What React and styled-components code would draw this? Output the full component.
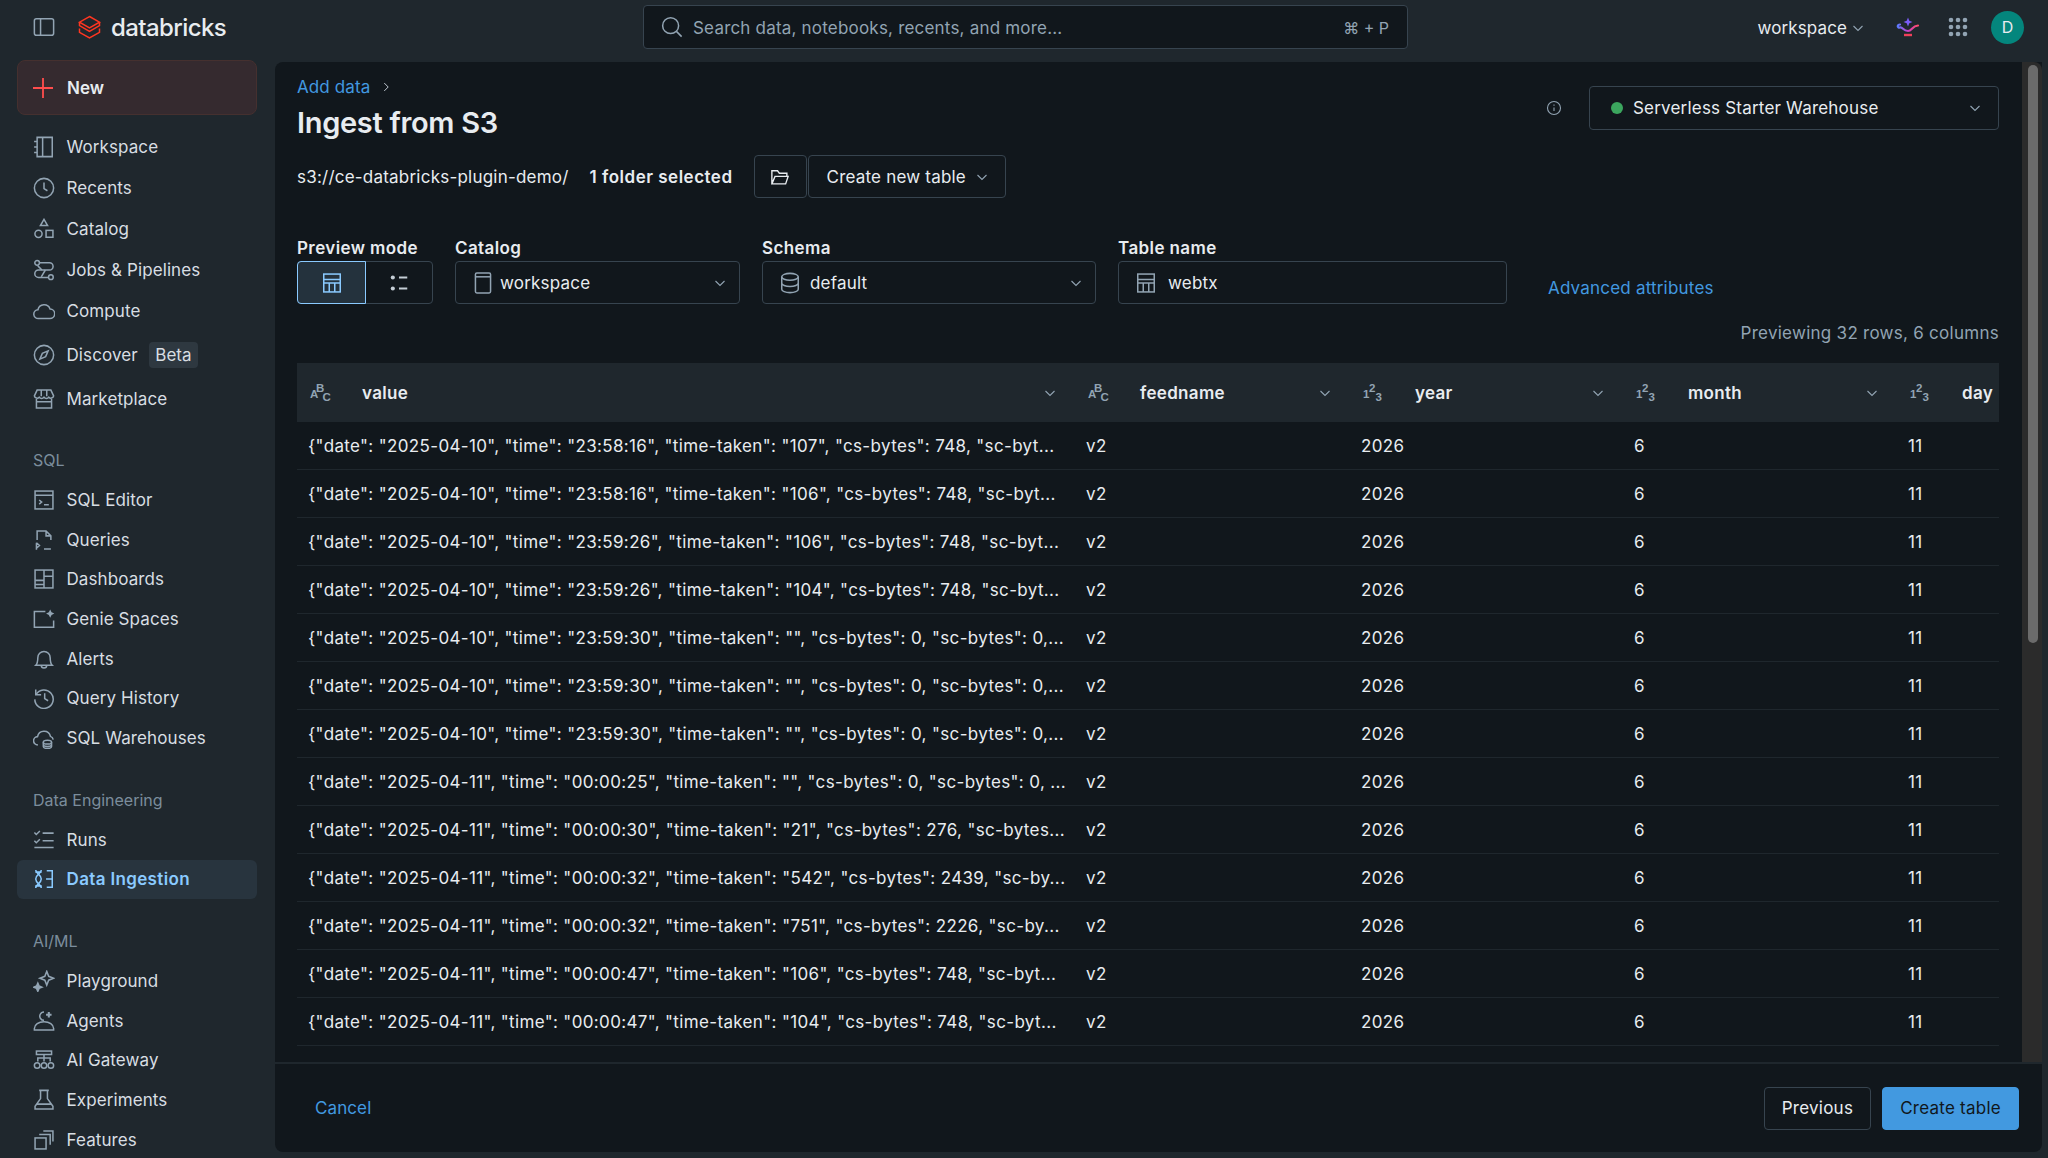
import React from 'react'
import styled, { createGlobalStyle } from 'styled-components'

const GlobalStyle = createGlobalStyle`
  html, body, #root {
    margin: 0;
    height: 100%;
    background: #1f272d;
  }

  body {
    overflow: hidden;
    font-family: Inter, 'Noto Sans', sans-serif;
    font-size: 17px;
    color: #e8ecf0;
  }
`

const icons = {
  panel: <><rect x="1" y="2" width="14" height="12" rx="1.5" /><path d="M5.5 2v12" /></>,
  workspace: <><path d="M3 1h11v14H3zM7 1v14" /><path d="M.8 4H3M.8 8H3M.8 12H3" /></>,
  recents: <><circle cx="8" cy="8" r="7" /><path d="M8 4v4.5l2.5 1.5" /></>,
  catalog: <><path d="M8 1l2.6 4.5H5.4z" /><circle cx="4" cy="11.5" r="2.6" /><rect x="9.5" y="9" width="5" height="5" /></>,
  jobs: <><circle cx="3" cy="2.8" r="1.7" /><circle cx="13" cy="13.2" r="1.7" /><path d="M4.7 2.8H12a2.6 2.6 0 0 1 0 5.2H4a2.6 2.6 0 0 0 0 5.4h7.3" /><path d="M3.5 5l3 3M9 8l-3 5" /></>,
  compute: <path d="M4 13.5a3.2 3.2 0 0 1-.4-6.4 4.6 4.6 0 0 1 8.8-.6 3.5 3.5 0 0 1-.2 7z" />,
  discover: <><circle cx="8" cy="8" r="7" /><path d="M11 5l-1.8 4.2L5 11l1.8-4.2z" /></>,
  marketplace: <><path d="M3 1.5h10l2 4.2a2 2 0 0 1-3.5 1 2.2 2.2 0 0 1-3.5 0 2.2 2.2 0 0 1-3.5 0A2 2 0 0 1 1 5.700z" /><path d="M2.500 8v6.500h11V8M2 10h12M6 1.500V6M10 1.500V6" /></>,
  editor: <><rect x="1.500" y="1.500" width="13" height="13" /><path d="M1.500 4.500h13M4.500 8l1.800 1.500L4.500 11M8 11.500h3.500" /></>,
  queries: <><path d="M3 8V1.500h6.500L13 5v3M9.500 1.500V5H13" /><path d="M2.500 10l2.200 2-2.200 2M8 14.500h5M2.500 10V15" /></>,
  dashboards: <><rect x="1.500" y="1.500" width="13" height="13" /><path d="M8 1.500v13M1.500 9h6.500M8 6h6.500M1.500 12h6.500" /></>,
  genie: <><path d="M9 2.500H1v11.500h14V9" /><path d="M12.500 1l1 2 2 1-2 1-1 2-1-2-2-1 2-1z" fill="currentColor" stroke="none" /></>,
  alerts: <><path d="M2 12.500c1.500-1.500 1.500-3 1.500-5.500a4.500 4.500 0 0 1 9 0c0 2.500 0 4 1.500 5.500z" /><path d="M6 12.500a2 2 0 0 0 4 0" /></>,
  history: <><path d="M2.200 5.500A6.700 6.700 0 1 1 1.300 9" /><path d="M2 1.800v3.900h3.900M8.500 4.500v4l2.500 1.500" /></>,
  warehouses: <><path d="M3.500 13a3 3 0 0 1-.2-6 4.800 4.800 0 0 1 9.400-.2 3 3 0 0 1 2 2.400" /><ellipse cx="10.500" cy="11" rx="3" ry="1.400" /><path d="M7.500 11v3.200c0 .800 1.400 1.400 3 1.400s3-.6 3-1.400V11M7.500 12.800c0 .8 1.400 1.400 3 1.400s3-.6 3-1.400" /></>,
  runs: <><path d="M1 2.500l1.400 1.500L5 1.500M1 8.500L2.400 10 5 7.500M7 3h8M1 13.500h14M7 8.500h8" /></>,
  ingestion: <><path d="M2 1.500c0 3 4 3 4 6.500s-4 3.500-4 6.500" /><path d="M6 1.500c0 3-4 3-4 6.500s4 3.500 4 6.500" /><path d="M1.800 3h4.400M1.800 13h4.400" /><path d="M10 2h4v12h-4M9.500 8H14" /></>,
  playground: <><path d="M10 1l1.400 3.600L15 6l-3.600 1.400L10 11 8.600 7.400 5 6l3.600-1.400z" /><path d="M3.500 9.500l.9 2.100 2.100.9-2.100.9-.9 2.100-.9-2.100-2.100-.9 2.100-.9z" fill="currentColor" /></>,
  agents: <><path d="M8 7.500a3 3 0 0 1-2.800-4.200A3 3 0 0 1 8 1.500" /><path d="M11.500 1.500v4M9.500 3.500h4" strokeWidth="1.500" /><path d="M1 13.500a7 5 0 0 1 14 0v1H1z" /></>,
  gateway: <><rect x="2.500" y="1.500" width="11" height="2.500" /><path d="M8 4v2.500M3.500 9V6.500h9V9M8 6.500V9" /><circle cx="3" cy="12" r="2" /><circle cx="8" cy="12" r="2" /><circle cx="13" cy="12" r="2" /></>,
  experiments: <><path d="M4.500 1h7M5.500 1v6L1.500 12.500v2h13v-2L10.500 7V1M3 11h10" /></>,
  features: <><rect x="1.500" y="6.500" width="8" height="8" /><path d="M4.500 4h8v7.500M7.500 1.500h7V9" /></>,
  table: <><rect x="2" y="1.500" width="12" height="13" /><path d="M2 5.500h12M2 8h12M6 8v6.500M10 8v6.500" /></>,
  list: <><circle cx="3.500" cy="4" r="1.500" fill="currentColor" stroke="none" /><circle cx="3.500" cy="12" r="1.500" fill="currentColor" stroke="none" /><path d="M8 4h6M8 12h6" strokeWidth="1.600" /></>,
  folder: <path d="M1.500 13.500V3h4.500l1.500 2h6v2.500M1.500 13.500h11l2-6H4z" />,
  catalogBox: <><rect x="2.500" y="0.800" width="11" height="14.400" rx="1" /><path d="M2.500 3.500h11" /></>,
  database: <><ellipse cx="8" cy="3.500" rx="6" ry="2.500" /><path d="M2 3.500v9c0 1.400 2.700 2.500 6 2.500s6-1.100 6-2.500v-9M2 8c0 1.400 2.700 2.500 6 2.500s6-1.100 6-2.500" /></>,
  info: <><circle cx="8" cy="8" r="6.500" /><path d="M8 7.500v3.500M8 4.500v1.200" /></>,
  search: <><circle cx="7" cy="7" r="5.800" /><path d="M11.200 11.200L15 15" /></>,
  chevron: <path d="M3.500 6l4.500 4.500L12.500 6" />,
  crumb: <path d="M6 3.500L10.500 8 6 12.500" />,
}

const Icon = ({ name, size = 22, ...rest }) => (
  <svg width={size} height={size} viewBox="0 0 16 16" fill="none" stroke="currentColor" strokeWidth="1.100" {...rest}>
    {icons[name]}
  </svg>
)

const Chevron = styled(Icon).attrs({ name: 'chevron', size: 16 })`
  color: #92a4b3;
  flex-shrink: 0;
`

const Logo = () => (
  <svg width="23" height="24" viewBox="0 0 23 24" fill="none" stroke="#ff3621" strokeWidth="1.500">
    <path d="M11.500 1.500l10 5.700-10 5.700-10-5.700z" />
    <path d="M1.500 7.200v3.400l10 5.700 10-5.700V7.200" />
    <path d="M1.500 13.600v3.700l10 5.700 10-5.700v-3.700" />
  </svg>
)

const GenieIcon = () => (
  <svg width="24" height="20" viewBox="0 0 24 20" fill="none">
    <defs>
      <linearGradient id="genieWave" x1="0" x2="1" y1="0" y2="0">
        <stop offset="0" stopColor="#5b7bff" />
        <stop offset="0.5" stopColor="#c93fc6" />
        <stop offset="1" stopColor="#ff4d6a" />
      </linearGradient>
    </defs>
    <path d="M12 0.500l1.300 3.200 3.200 1.300-3.200 1.300L12 9.500l-1.300-3.200L7.500 5l3.200-1.300z" fill="#7a5cf5" />
    <path d="M4 7.500C1 7.500 1 11 4 10.500 7 10 7 14 12 14 16 14 16 9 22 8.500" stroke="url(#genieWave)" strokeWidth="2.200" strokeLinecap="round" />
    <path d="M8 18h8" stroke="#f0405a" strokeWidth="2.400" />
  </svg>
)

const GridDots = () => (
  <svg width="20" height="20" viewBox="0 0 20 20" fill="#92a4b3">
    {[3, 10, 17].flatMap((y) => [3, 10, 17].map((x) => <circle key={`${x}-${y}`} cx={x} cy={y} r="2.300" />))}
  </svg>
)

const TypeGlyph = styled.svg`
  flex-shrink: 0;
  overflow: visible;
`

const TypeIcon = ({ chars }) => (
  <TypeGlyph width="21" height="21" viewBox="0 0 21 21" fill="#92a4b3" fontFamily="'Liberation Sans', sans-serif" fontSize="11.500" fontWeight="700">
    <text x="0" y="15.500">{chars[0]}</text>
    <text x="6" y="9.500">{chars[1]}</text>
    <text x="12.500" y="19">{chars[2]}</text>
  </TypeGlyph>
)

const Shell = styled.div`
  display: grid;
  grid-template-columns: 275px 1fr;
  grid-template-rows: 60px 1fr;
  height: 100vh;
  overflow: hidden;
`

const TopBar = styled.header`
  grid-column: 1 / 3;
  display: flex;
  align-items: center;
  height: 54px;
  padding-right: 24px;
`

const TopLeft = styled.div`
  display: flex;
  align-items: center;
  width: 643px;
  padding-left: 33px;
  box-sizing: border-box;
  color: #92a4b3;
`

const LogoWrap = styled.div`
  display: flex;
  align-items: center;
  gap: 10px;
  margin-left: 23px;
`

const LogoText = styled.span`
  font-size: 24px;
  font-weight: 500;
  letter-spacing: -0.6px;
  color: #e8ecf0;
`

const Search = styled.div`
  display: flex;
  align-items: center;
  width: 765px;
  height: 44px;
  padding: 0 18px 0 17px;
  box-sizing: border-box;
  background: #11171c;
  border: 1px solid #37444f;
  border-radius: 4px;
  color: #92a4b3;
`

const SearchText = styled.span`
  flex: 1;
  margin: 2px 0 0 10px;
  letter-spacing: 0.2px;
`

const Shortcut = styled.span`
  margin-top: 2px;
  font-size: 16px;
`

const TopRight = styled.div`
  display: flex;
  align-items: center;
  margin-left: auto;
`

const WorkspaceName = styled.div`
  display: flex;
  align-items: center;
  gap: 3px;
  margin: 2px 30px 0 0;
  letter-spacing: 0.1px;
`

const GenieWrap = styled.div`
  display: flex;
  margin-right: 28px;
`

const Avatar = styled.div`
  display: flex;
  align-items: center;
  justify-content: center;
  width: 33px;
  height: 33px;
  margin-left: 23px;
  border-radius: 50%;
  background: #04867d;
  font-size: 16px;
`

const Sidebar = styled.nav`
  overflow: hidden;
  padding: 0 18px 0 17px;
`

const NewButton = styled.div`
  display: flex;
  align-items: center;
  gap: 14px;
  height: 55px;
  padding-left: 15px;
  margin-bottom: 11px;
  box-sizing: border-box;
  background: #352a2f;
  border: 1px solid #45302f;
  border-radius: 8px;
  font-weight: 600;
  color: #ff4d4d;
`

const NewLabel = styled.span`
  color: #e8ecf0;
`

const NavRow = styled.div`
  display: flex;
  align-items: center;
  gap: 11.5px;
  height: ${({ $height }) => $height}px;
  padding-left: 16px;
  border-radius: 6px;
  background: ${({ $active }) => ($active ? '#28343e' : 'transparent')};
  color: ${({ $active }) => ($active ? '#8acaff' : '#92a4b3')};
`

const NavLabel = styled.span`
  color: ${({ $active }) => ($active ? '#8acaff' : '#d8dee3')};
  font-weight: ${({ $active }) => ($active ? 600 : 400)};
  letter-spacing: ${({ $active }) => ($active ? '0.35px' : '0.1px')};
`

const Tag = styled.span`
  padding: 3px 6px;
  border-radius: 4px;
  background: #2e3840;
  color: #d8dee3;
`

const SectionTitle = styled.div`
  height: 24px;
  line-height: 24px;
  padding-left: 16px;
  margin: ${({ $top }) => $top}px 0 8px;
  font-size: 16px;
  color: #7b8d9c;
`

const Panel = styled.main`
  display: flex;
  flex-direction: column;
  margin: 2px 6px 6px 0;
  min-height: 0;
  background: #11171c;
  border-radius: 8px 0 8px 8px;
  overflow: hidden;
`

const ScrollArea = styled.div`
  display: flex;
  flex: 1;
  min-height: 0;
`

const Content = styled.div`
  flex: 1;
  min-width: 0;
  padding: 13px 23px 0 22px;
  overflow: hidden;
`

const Track = styled.div`
  width: 20px;
  padding: 3px 4px 0 6px;
  box-sizing: border-box;
  background: #2b2b2b;
  border-radius: 0 8px 0 0;
`

const Thumb = styled.div`
  height: 578px;
  border-radius: 5px;
  background: #6b6b6b;
`

const HeadRow = styled.div`
  display: flex;
  justify-content: space-between;
  align-items: flex-start;
`

const Crumbs = styled.div`
  display: flex;
  align-items: center;
  gap: 9px;
  height: 24px;
  color: #c5ced6;
`

const BlueLink = styled.a`
  color: #4299e0;
  letter-spacing: 0.1px;
`

const Title = styled.h1`
  margin: 6px 0 14px;
  font-size: 29px;
  line-height: 36px;
  font-weight: 600;
  letter-spacing: -0.3px;
`

const WarehouseWrap = styled.div`
  display: flex;
  align-items: center;
  gap: 27px;
  margin-top: 11px;
  color: #92a4b3;
`

const Select = styled.div`
  display: flex;
  align-items: center;
  height: 43px;
  padding: 0 11px 0 16px;
  box-sizing: border-box;
  border: 1px solid #37444f;
  border-radius: 4px;
  color: #e8ecf0;
  background: transparent;
  letter-spacing: 0.2px;
`

const Warehouse = styled(Select)`
  width: 410px;
  height: 44px;
  padding: 0 15px 0 21px;
`

const GreenDot = styled.span`
  width: 12px;
  height: 12px;
  margin-right: 10px;
  border-radius: 50%;
  background: #3ba65e;
`

const Grow = styled.span`
  flex: 1;
`

const PathRow = styled.div`
  display: flex;
  align-items: center;
  height: 43px;
`

const PathText = styled.span`
  margin-right: 21px;
  letter-spacing: 0.22px;
`

const Strong = styled.span`
  font-weight: 600;
  margin-right: 21px;
  letter-spacing: 0.5px;
`

const FolderButton = styled(Select)`
  justify-content: center;
  width: 53px;
  padding: 0;
  margin-right: 1px;
`

const CreateSelect = styled(Select)`
  gap: 8px;
  padding: 0 15px 0 18px;
`

const FormRow = styled.div`
  display: grid;
  grid-template-columns: 136px 285px 334px 389px auto;
  column-gap: 22px;
  margin-top: 39px;
`

const Field = styled.div`
  display: flex;
  flex-direction: column;
`

const Label = styled.label`
  height: 22px;
  line-height: 22px;
  margin-bottom: 2px;
  font-weight: 600;
  color: #e8ecf0;
  letter-spacing: 0.4px;
  white-space: nowrap;
`

const Segments = styled.div`
  display: grid;
  grid-template-columns: 68px 1fr;
  height: 43px;
  box-sizing: border-box;
  border: 1px solid #37444f;
  border-radius: 4px;
`

const Segment = styled.div`
  display: flex;
  align-items: center;
  justify-content: center;
  margin: -1px 0 -1px -1px;
  border-radius: 4px 0 0 4px;
  color: ${({ $on }) => ($on ? '#8acaff' : '#c5ced6')};
  background: ${({ $on }) => ($on ? '#24323d' : 'transparent')};
  border: ${({ $on }) => ($on ? '1px solid #8acaff' : 'none')};
`

const FieldIcon = styled(Icon)`
  color: #92a4b3;
  margin-right: ${({ $gap }) => $gap}px;
  flex-shrink: 0;
`

const AdvancedLink = styled(BlueLink)`
  align-self: end;
  margin: 0 0 4px 19px;
  line-height: 24px;
  letter-spacing: 0.2px;
`

const Counter = styled.div`
  margin-top: 17px;
  line-height: 24px;
  text-align: right;
  color: #92a4b3;
  letter-spacing: 0.27px;
`

const Table = styled.div`
  margin-top: 18px;
`

const Row = styled.div`
  display: grid;
  grid-template-columns: 778px 275px 273px 274px 1fr;
`

const HeaderRow = styled(Row)`
  height: 59px;
  background: #1f272d;
`

const HeadCell = styled.div`
  display: flex;
  align-items: center;
  padding-left: 13px;
  overflow: hidden;
  font-weight: 600;
  letter-spacing: 0.3px;
`

const HeadName = styled.span`
  flex: 1;
  margin-left: 31px;
`

const HeadChevron = styled(Chevron)`
  margin-right: 17px;
`

const BodyRow = styled(Row)`
  height: 48px;
  box-sizing: border-box;
  border-bottom: 1px solid #1f272d;
`

const Cell = styled.div`
  display: flex;
  align-items: center;
  padding-left: 11px;
  white-space: nowrap;
  overflow: hidden;
  letter-spacing: 0.355px;
`

const Footer = styled.footer`
  display: flex;
  align-items: center;
  height: 90px;
  padding: 0 23px 0 40px;
  box-sizing: border-box;
  border-top: 2px solid #1f272d;
`

const Previous = styled.div`
  display: flex;
  align-items: center;
  height: 43px;
  padding: 0 17px;
  margin-left: auto;
  box-sizing: border-box;
  border: 1px solid #37444f;
  border-radius: 4px;
  letter-spacing: 0.25px;
`

const Primary = styled(Previous)`
  margin-left: 11px;
  background: #4299e0;
  border-color: #4299e0;
  color: #11171c;
`

const mainNav = [
  ['workspace', 'Workspace', 41],
  ['recents', 'Recents', 41],
  ['catalog', 'Catalog', 41],
  ['jobs', 'Jobs & Pipelines', 41],
  ['compute', 'Compute', 41],
  ['discover', 'Discover', 47, 'Beta'],
  ['marketplace', 'Marketplace', 41],
]

const sections = [
  {
    title: 'SQL',
    top: 29,
    items: [
      ['editor', 'SQL Editor'],
      ['queries', 'Queries'],
      ['dashboards', 'Dashboards'],
      ['genie', 'Genie Spaces'],
      ['alerts', 'Alerts'],
      ['history', 'Query History'],
      ['warehouses', 'SQL Warehouses'],
    ],
  },
  {
    title: 'Data Engineering',
    top: 30,
    items: [
      ['runs', 'Runs'],
      ['ingestion', 'Data Ingestion', true],
    ],
  },
  {
    title: 'AI/ML',
    top: 30,
    items: [
      ['playground', 'Playground'],
      ['agents', 'Agents'],
      ['gateway', 'AI Gateway'],
      ['experiments', 'Experiments'],
      ['features', 'Features'],
    ],
  },
]

const columns = [
  ['ABC', 'value', true],
  ['ABC', 'feedname', true],
  ['123', 'year', true],
  ['123', 'month', true],
  ['123', 'day', false],
]

const rows = [
  '{"date": "2025-04-10", "time": "23:58:16", "time-taken": "107", "cs-bytes": 748, "sc-byt...',
  '{"date": "2025-04-10", "time": "23:58:16", "time-taken": "106", "cs-bytes": 748, "sc-byt...',
  '{"date": "2025-04-10", "time": "23:59:26", "time-taken": "106", "cs-bytes": 748, "sc-byt...',
  '{"date": "2025-04-10", "time": "23:59:26", "time-taken": "104", "cs-bytes": 748, "sc-byt...',
  '{"date": "2025-04-10", "time": "23:59:30", "time-taken": "", "cs-bytes": 0, "sc-bytes": 0,...',
  '{"date": "2025-04-10", "time": "23:59:30", "time-taken": "", "cs-bytes": 0, "sc-bytes": 0,...',
  '{"date": "2025-04-10", "time": "23:59:30", "time-taken": "", "cs-bytes": 0, "sc-bytes": 0,...',
  '{"date": "2025-04-11", "time": "00:00:25", "time-taken": "", "cs-bytes": 0, "sc-bytes": 0, ...',
  '{"date": "2025-04-11", "time": "00:00:30", "time-taken": "21", "cs-bytes": 276, "sc-bytes...',
  '{"date": "2025-04-11", "time": "00:00:32", "time-taken": "542", "cs-bytes": 2439, "sc-by...',
  '{"date": "2025-04-11", "time": "00:00:32", "time-taken": "751", "cs-bytes": 2226, "sc-by...',
  '{"date": "2025-04-11", "time": "00:00:47", "time-taken": "106", "cs-bytes": 748, "sc-byt...',
  '{"date": "2025-04-11", "time": "00:00:47", "time-taken": "104", "cs-bytes": 748, "sc-byt...',
  '{"date": "2025-04-11", "time": "00:00:47", "time-taken": "105", "cs-bytes": 748, "sc-byt...',
]

const App = () => {
  return (
    <Shell>
      <GlobalStyle />
      <TopBar>
        <TopLeft>
          <Icon name="panel" />
          <LogoWrap>
            <Logo />
            <LogoText>databricks</LogoText>
          </LogoWrap>
        </TopLeft>
        <Search>
          <Icon name="search" />
          <SearchText>Search data, notebooks, recents, and more...</SearchText>
          <Shortcut>⌘ + P</Shortcut>
        </Search>
        <TopRight>
          <WorkspaceName>
            workspace
            <Chevron />
          </WorkspaceName>
          <GenieWrap>
            <GenieIcon />
          </GenieWrap>
          <GridDots />
          <Avatar>D</Avatar>
        </TopRight>
      </TopBar>

      <Sidebar>
        <NewButton>
          <svg width="20" height="20" viewBox="0 0 20 20" stroke="currentColor" strokeWidth="1.800">
            <path d="M10 0v20M0 10h20" />
          </svg>
          <NewLabel>New</NewLabel>
        </NewButton>
        {mainNav.map(([icon, label, height, tag]) => (
          <NavRow key={label} $height={height}>
            <Icon name={icon} />
            <NavLabel>{label}</NavLabel>
            {tag && <Tag>{tag}</Tag>}
          </NavRow>
        ))}
        {sections.map((section) => (
          <div key={section.title}>
            <SectionTitle $top={section.top}>{section.title}</SectionTitle>
            {section.items.map(([icon, label, active]) => (
              <NavRow key={label} $height={39.7} $active={active}>
                <Icon name={icon} />
                <NavLabel $active={active}>{label}</NavLabel>
              </NavRow>
            ))}
          </div>
        ))}
      </Sidebar>

      <Panel>
        <ScrollArea>
          <Content>
            <HeadRow>
              <div>
                <Crumbs>
                  <BlueLink>Add data</BlueLink>
                  <Icon name="crumb" size={14} />
                </Crumbs>
                <Title>Ingest from S3</Title>
              </div>
              <WarehouseWrap>
                <Icon name="info" size={16} />
                <Warehouse>
                  <GreenDot />
                  Serverless Starter Warehouse
                  <Grow />
                  <Chevron />
                </Warehouse>
              </WarehouseWrap>
            </HeadRow>

            <PathRow>
              <PathText>s3://ce-databricks-plugin-demo/</PathText>
              <Strong>1 folder selected</Strong>
              <FolderButton>
                <Icon name="folder" size={20} />
              </FolderButton>
              <CreateSelect>
                Create new table
                <Chevron />
              </CreateSelect>
            </PathRow>

            <FormRow>
              <Field>
                <Label>Preview mode</Label>
                <Segments>
                  <Segment $on>
                    <Icon name="table" />
                  </Segment>
                  <Segment>
                    <Icon name="list" />
                  </Segment>
                </Segments>
              </Field>
              <Field>
                <Label>Catalog</Label>
                <Select>
                  <FieldIcon name="catalogBox" $gap={6} />
                  <Grow>workspace</Grow>
                  <Chevron />
                </Select>
              </Field>
              <Field>
                <Label>Schema</Label>
                <Select>
                  <FieldIcon name="database" $gap={9} />
                  <Grow>default</Grow>
                  <Chevron />
                </Select>
              </Field>
              <Field>
                <Label>Table name</Label>
                <Select>
                  <FieldIcon name="table" $gap={11} />
                  <Grow>webtx</Grow>
                </Select>
              </Field>
              <AdvancedLink>Advanced attributes</AdvancedLink>
            </FormRow>

            <Counter>Previewing 32 rows, 6 columns</Counter>

            <Table>
              <HeaderRow>
                {columns.map(([chars, name, chevron]) => (
                  <HeadCell key={name}>
                    <TypeIcon chars={chars} />
                    <HeadName>{name}</HeadName>
                    {chevron && <HeadChevron />}
                  </HeadCell>
                ))}
              </HeaderRow>
              {rows.map((value, index) => (
                <BodyRow key={index}>
                  <Cell>{value}</Cell>
                  <Cell>v2</Cell>
                  <Cell>2026</Cell>
                  <Cell>6</Cell>
                  <Cell>11</Cell>
                </BodyRow>
              ))}
            </Table>
          </Content>
          <Track>
            <Thumb />
          </Track>
        </ScrollArea>
        <Footer>
          <BlueLink>Cancel</BlueLink>
          <Previous>Previous</Previous>
          <Primary>Create table</Primary>
        </Footer>
      </Panel>
    </Shell>
  )
}

export default App
